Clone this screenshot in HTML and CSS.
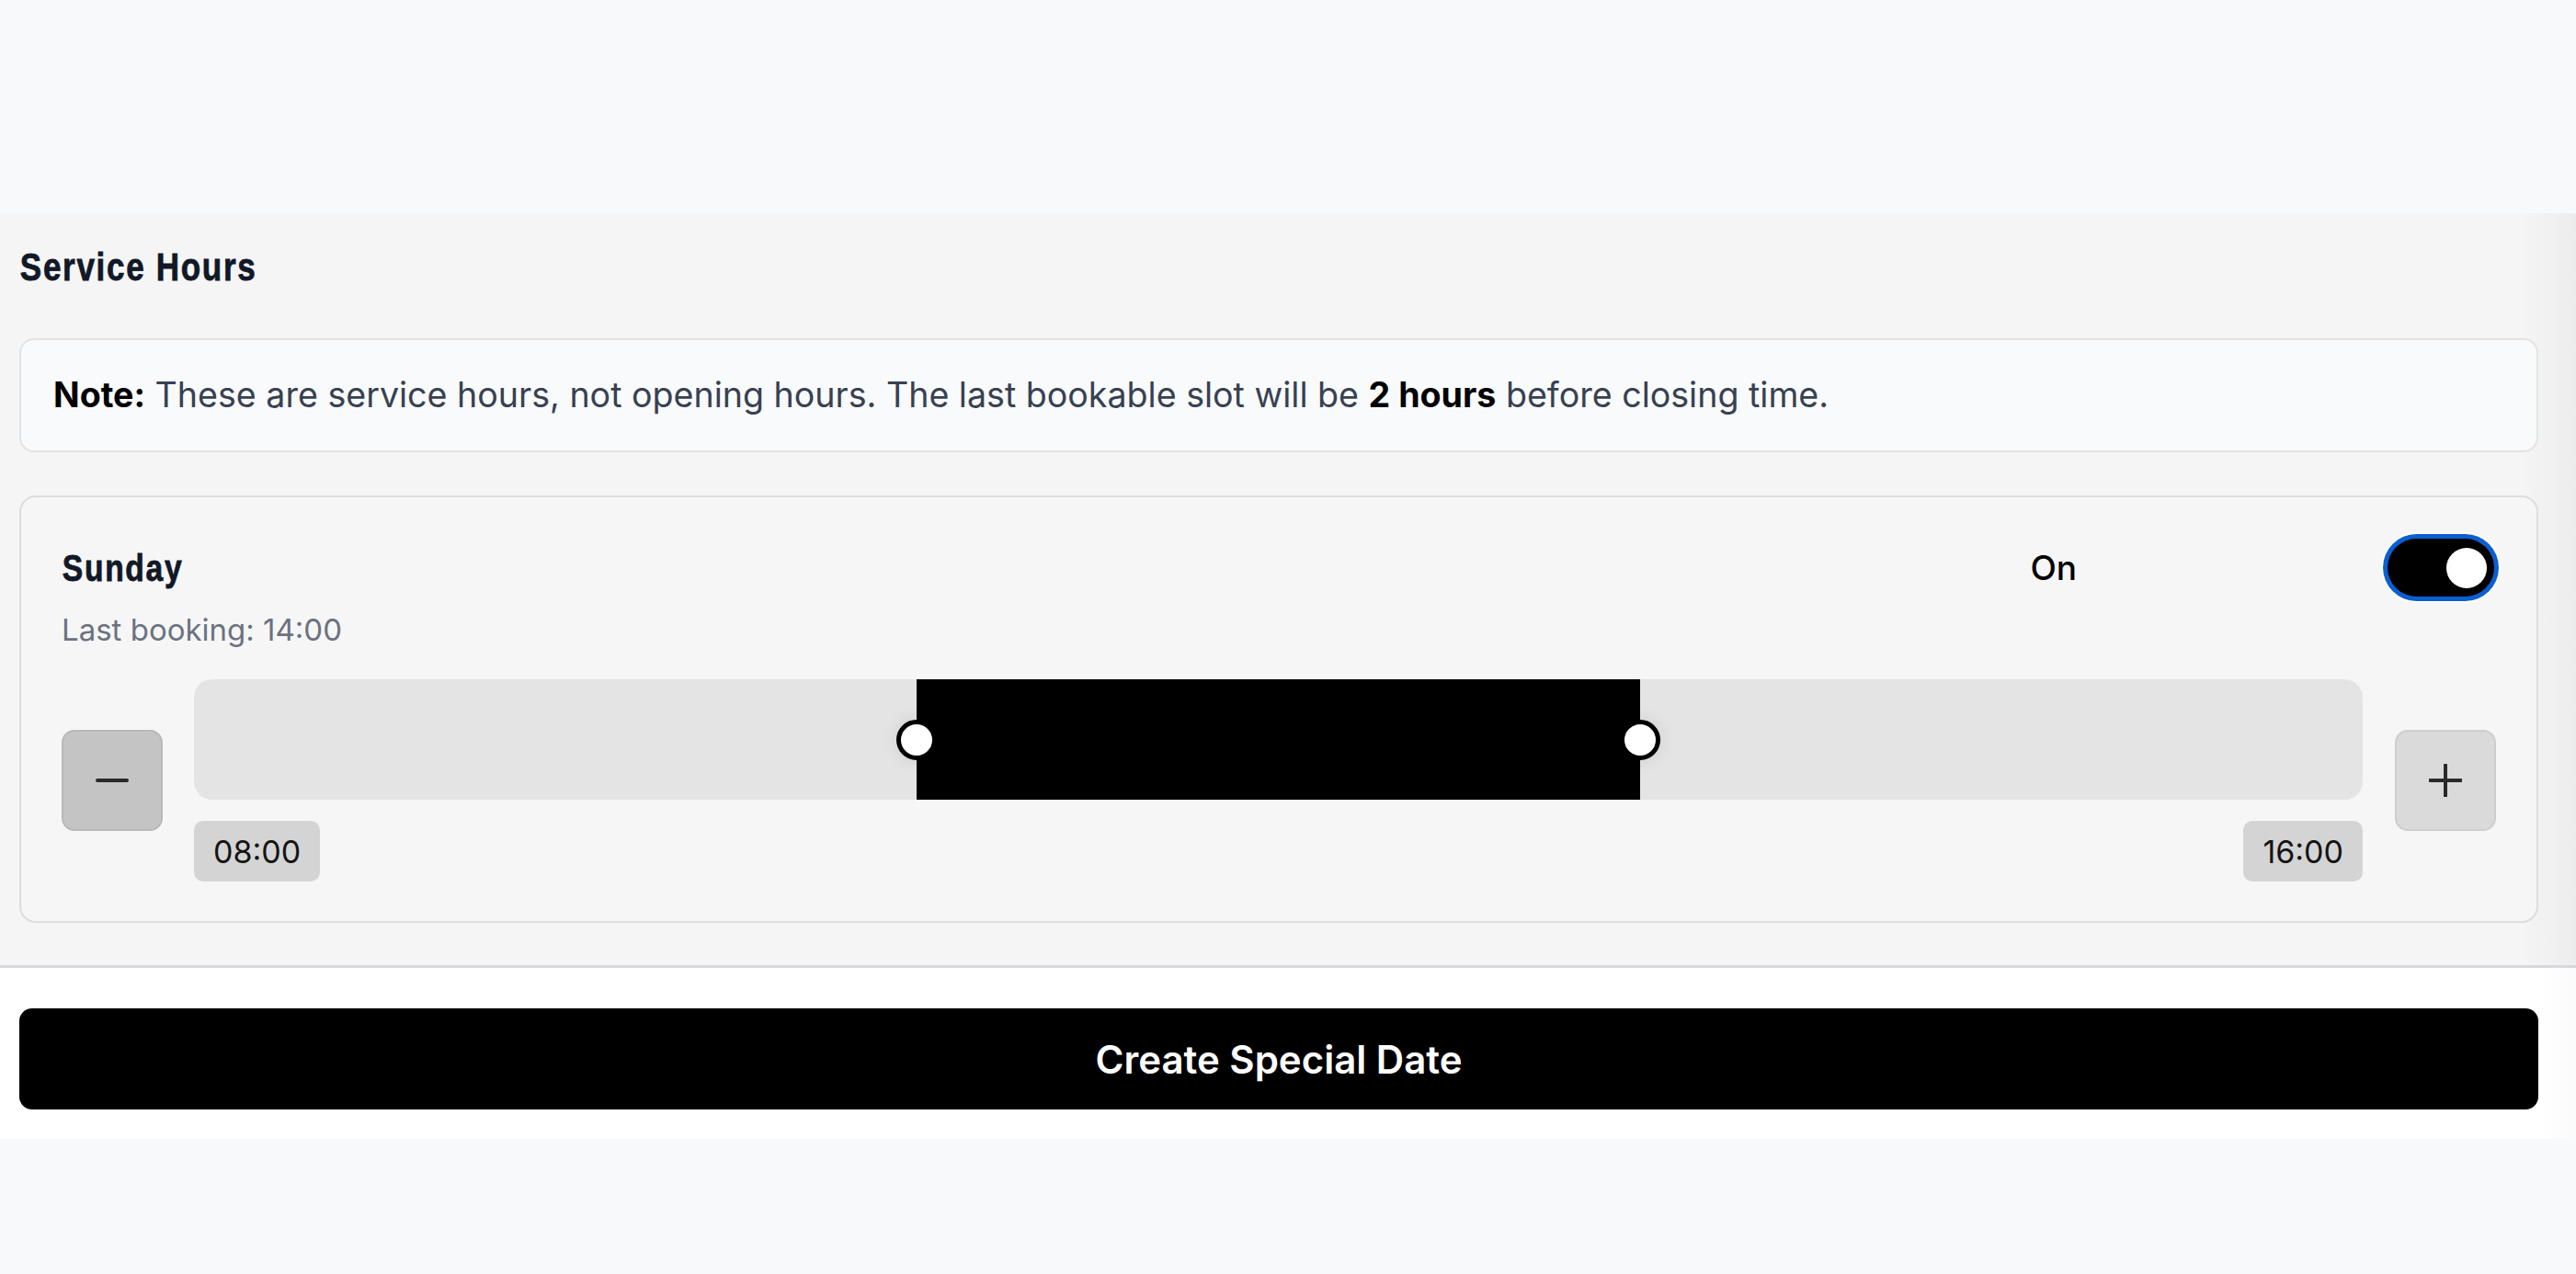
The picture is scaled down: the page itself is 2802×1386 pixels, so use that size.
FILE: index.html
```html
<!DOCTYPE html>
<html lang="en">
<head>
<meta charset="utf-8">
<title>Service Hours</title>
<link rel="stylesheet" href="styles.css">
</head>
<body>
<div class="page">
  <div class="top-area"></div>
  <section class="hours">
    <h2 class="title">Service Hours</h2>
    <div class="note"><strong>Note:</strong> These are service hours, not opening hours. The last bookable slot will be <strong>2 hours</strong> before closing time.</div>
    <div class="day-card">
      <div class="day-head">
        <h3 class="day-name">Sunday</h3>
        <div class="day-status">
          <span class="status-label">On</span>
          <button class="toggle" type="button" aria-pressed="true"><span class="knob"></span></button>
        </div>
      </div>
      <p class="last-booking">Last booking: 14:00</p>
      <div class="slider-row">
        <button class="step step-minus" type="button" aria-label="Decrease">
          <svg viewBox="0 0 36 36" width="36" height="36"><line x1="2" y1="18" x2="34" y2="18"/></svg>
        </button>
        <div class="slider">
          <div class="track">
            <div class="range" style="left:33.333%;width:33.333%"></div>
            <span class="handle" style="left:33.333%"></span>
            <span class="handle" style="left:66.667%"></span>
          </div>
          <div class="time-labels">
            <span class="time">08:00</span>
            <span class="time">16:00</span>
          </div>
        </div>
        <button class="step step-plus" type="button" aria-label="Increase">
          <svg viewBox="0 0 36 36" width="36" height="36"><line x1="1" y1="18" x2="35" y2="18"/><line x1="18" y1="1" x2="18" y2="35"/></svg>
        </button>
      </div>
    </div>
  </section>
  <div class="actions">
    <button class="create" type="button">Create Special Date</button>
  </div>
  <div class="bottom-area"></div>
</div>
</body>
</html>
```

FILE: styles.css
```css
* { box-sizing: border-box; }

html, body {
  margin: 0;
  padding: 0;
  background: #f8f9fb;
  font-family: Inter, "Noto Sans", "Liberation Sans", sans-serif;
}

.page {
  display: flex;
  flex-direction: column;
  min-height: 1386px;
}

.top-area {
  height: 232px;
  background: #f8f9fb;
}

.hours {
  background: linear-gradient(to right, rgba(0,0,0,0) calc(100% - 60px), rgba(0,0,0,0.035) 100%), #f5f5f5;
  padding: 35px 41px 46px 21px;
  border-bottom: 3px solid #d6d8dd;
}

.title {
  margin: 0;
  font-family: "Liberation Sans", Arial, sans-serif;
  font-weight: 700;
  font-size: 42px;
  line-height: 48px;
  letter-spacing: 2px;
  color: #111827;
  padding-left: 1px;
  -webkit-text-stroke: 0.8px #111827;
  transform: scaleX(0.835);
  transform-origin: left center;
}

.note {
  margin-top: 53px;
  background: #f9fafb;
  border: 2px solid #e3e3e3;
  border-radius: 16px;
  padding: 31px 35px;
  font-size: 37.6px;
  line-height: 58px;
  color: #374151;
}

.note strong {
  color: #000;
  font-weight: 700;
}

.day-card {
  margin-top: 47px;
  background: #f6f6f6;
  border: 2px solid #dddddd;
  border-radius: 18px;
  padding: 45px 44px 43px 44px;
}

.day-head {
  display: flex;
  align-items: center;
  justify-content: space-between;
  height: 63px;
  padding-right: 2px;
}

.day-name {
  margin: 0;
  font-family: "Liberation Sans", Arial, sans-serif;
  font-weight: 700;
  font-size: 40px;
  letter-spacing: 2px;
  color: #111827;
  line-height: 48px;
  padding-left: 1px;
  -webkit-text-stroke: 0.8px #111827;
  transform: scaleX(0.84);
  transform-origin: left center;
}

.day-status {
  display: flex;
  align-items: center;
  gap: 338px;
}

.status-label {
  font-size: 37px;
  font-weight: 500;
  color: #000;
}

.toggle {
  position: relative;
  width: 116px;
  height: 63px;
  border: 0;
  padding: 0;
  border-radius: 999px;
  background: #000;
  box-shadow: 0 0 0 5px #0b5fd0, 0 0 0 7px #ffffff;
  cursor: pointer;
}

.knob {
  position: absolute;
  top: 9.5px;
  right: 8px;
  width: 44px;
  height: 44px;
  border-radius: 50%;
  background: #fff;
}

.last-booking {
  margin: 12px 0 0;
  font-size: 33px;
  line-height: 48px;
  color: #6b7280;
}

.slider-row {
  margin-top: 30px;
  display: flex;
  align-items: center;
}

.step {
  flex: 0 0 auto;
  width: 110px;
  height: 110px;
  border-radius: 14px;
  display: flex;
  align-items: center;
  justify-content: center;
  padding: 0;
  cursor: pointer;
}

.step svg line {
  stroke: #2a2a2a;
  stroke-width: 4;
  stroke-linecap: round;
}

.step-minus {
  background: #c4c4c4;
  border: 2px solid #b9b9b9;
  margin-right: 34px;
}

.step-plus {
  background: #dadada;
  border: 2px solid #cecece;
  margin-left: 35px;
}

.slider {
  flex: 1 1 auto;
  display: flex;
  flex-direction: column;
}

.track {
  position: relative;
  height: 131px;
  background: #e4e4e4;
  border-radius: 20px;
}

.range {
  position: absolute;
  top: 0;
  bottom: 0;
  background: #000;
}

.handle {
  position: absolute;
  top: 50%;
  width: 44px;
  height: 44px;
  margin: -22px 0 0 -22px;
  border-radius: 50%;
  background: #fff;
  border: 5px solid #000;
  box-shadow: 0 0 16px 4px rgba(0,0,0,0.06);
}

.time-labels {
  margin-top: 23px;
  display: flex;
  justify-content: space-between;
}

.time {
  height: 66px;
  padding: 0 21px;
  display: flex;
  align-items: center;
  background: #d4d4d4;
  border-radius: 10px;
  font-size: 34px;
  color: #141414;
}

.actions {
  background: linear-gradient(to right, rgba(0,0,0,0) calc(100% - 40px), rgba(0,0,0,0.02) 100%), #ffffff;
  padding: 44px 41px 32px 21px;
}

.create {
  display: block;
  width: 100%;
  height: 110px;
  border: 0;
  border-radius: 14px;
  background: #000;
  color: #fff;
  font-family: Inter, "Noto Sans", "Liberation Sans", sans-serif;
  font-size: 42px;
  font-weight: 600;
  cursor: pointer;
}

.bottom-area {
  flex: 1 1 auto;
  background: #f8f9fb;
}
```
